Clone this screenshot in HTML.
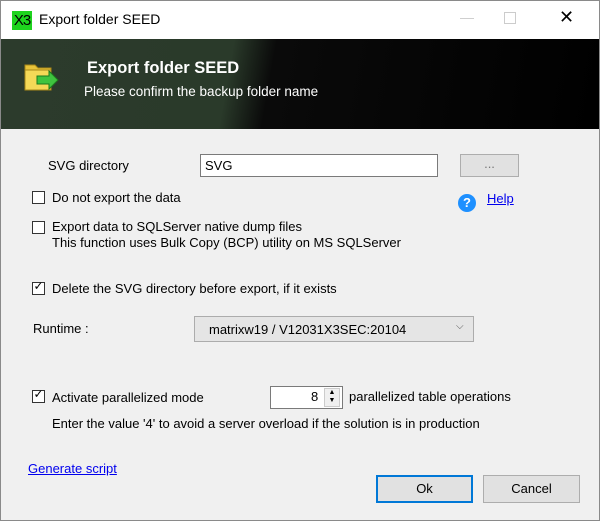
<!DOCTYPE html>
<html><head><style>
body{margin:0;width:600px;height:522px;overflow:hidden;background:#fff;font-family:"Liberation Sans",sans-serif;font-size:13px;color:#000;position:relative}
.a{position:absolute;white-space:nowrap}
.win{position:absolute;left:0;top:0;width:598px;height:519px;border:1px solid #8a8a8a;background:#f0f0f0}
.cb{position:absolute;width:13px;height:13px;border:1px solid #333;background:#fff;box-sizing:border-box}
.btn{position:absolute;background:#e1e1e1;border:1px solid #adadad;box-sizing:border-box;text-align:center}
a{color:#0000ee;text-decoration:underline}
</style></head><body>
<div class="win">
<div class="a" style="left:0;top:0;width:598px;height:38px;background:#fff"></div>
<div class="a" style="left:11px;top:10px;width:20px;height:19px;background:#1ed31e;color:#000;font-size:15px;line-height:19px;text-align:center;letter-spacing:-1px">X3</div>
<div class="a" style="left:38px;top:10px;font-size:14px">Export folder SEED</div>
<div class="a" style="left:459px;top:8px;font-size:14px;color:#ccc">—</div>
<div class="a" style="left:503px;top:11px;width:10px;height:10px;border:1px solid #ccc"></div>
<div class="a" style="left:558px;top:6px;font-size:18px">✕</div>
<div class="a" style="left:0;top:38px;width:598px;height:90px;background:linear-gradient(100deg,#2c3b2c 0%,#2a3a2a 38%,#0a0a0a 45%,#000 100%)"></div>
<svg class="a" style="left:22px;top:60px" width="44" height="34"><path d="M2 4h10l3 3h13v22H2z" fill="#e8c43a" stroke="#a88718"/><rect x="2" y="9" width="26" height="20" fill="#f5d957" stroke="#a88718"/><path d="M14 15h12v-5l9 9-9 9v-5H14z" fill="#3fc43f" stroke="#1c7a1c"/></svg>
<div class="a" style="left:86px;top:58px;color:#fff;font-weight:bold;font-size:16.5px">Export folder SEED</div>
<div class="a" style="left:83px;top:83px;color:#fff;font-size:13.5px">Please confirm the backup folder name</div>
<div class="a" style="left:47px;top:157px">SVG directory</div>
<div class="a" style="left:199px;top:153px;width:238px;height:23px;background:#fff;border:1px solid #7a7a7a;box-sizing:border-box;padding:3px 4px">SVG</div>
<div class="btn" style="left:459px;top:153px;width:59px;height:23px;color:#777;line-height:18px">...</div>
<div class="cb" style="left:31px;top:190px"></div>
<div class="a" style="left:51px;top:189px">Do not export the data</div>
<div class="a" style="left:457px;top:193px;width:18px;height:18px;border-radius:50%;background:#1e90ff;color:#fff;font-weight:bold;text-align:center;line-height:18px">?</div>
<div class="a" style="left:486px;top:190px"><a>Help</a></div>
<div class="cb" style="left:31px;top:220px"></div>
<div class="a" style="left:51px;top:218px">Export data to SQLServer native dump files</div>
<div class="a" style="left:51px;top:234px">This function uses Bulk Copy (BCP) utility on MS SQLServer</div>
<div class="cb" style="left:31px;top:281px"></div>
<div class="a" style="left:31px;top:278px;font-size:12px;width:13px;text-align:center">✓</div>
<div class="a" style="left:51px;top:280px">Delete the SVG directory before export, if it exists</div>
<div class="a" style="left:32px;top:320px">Runtime :</div>
<div class="a" style="left:193px;top:315px;width:280px;height:26px;background:#e5e5e5;border:1px solid #acacac;box-sizing:border-box;padding:5px 14px">matrixw19 / V12031X3SEC:20104</div>
<div class="a" style="left:455px;top:320px;color:#555;font-size:10px">⌵</div>
<div class="cb" style="left:31px;top:389px"></div>
<div class="a" style="left:31px;top:386px;font-size:12px;width:13px;text-align:center">✓</div>
<div class="a" style="left:51px;top:389px">Activate parallelized mode</div>
<div class="a" style="left:269px;top:385px;width:73px;height:23px;background:#fff;border:1px solid #7a7a7a;box-sizing:border-box"></div>
<div class="a" style="left:310px;top:388px">8</div>
<div class="a" style="left:323px;top:387px;width:16px;height:19px;background:#f0f0f0;border:1px solid #ccc;box-sizing:border-box;font-size:7px;line-height:8px;text-align:center">▲<br>▼</div>
<div class="a" style="left:348px;top:388px">parallelized table operations</div>
<div class="a" style="left:51px;top:415px">Enter the value '4' to avoid a server overload if the solution is in production</div>
<div class="a" style="left:27px;top:460px"><a>Generate script</a></div>
<div class="btn" style="left:375px;top:474px;width:97px;height:28px;border:2px solid #0078d7;line-height:24px">Ok</div>
<div class="btn" style="left:482px;top:474px;width:97px;height:28px;line-height:26px">Cancel</div>
</div>
</body></html>
